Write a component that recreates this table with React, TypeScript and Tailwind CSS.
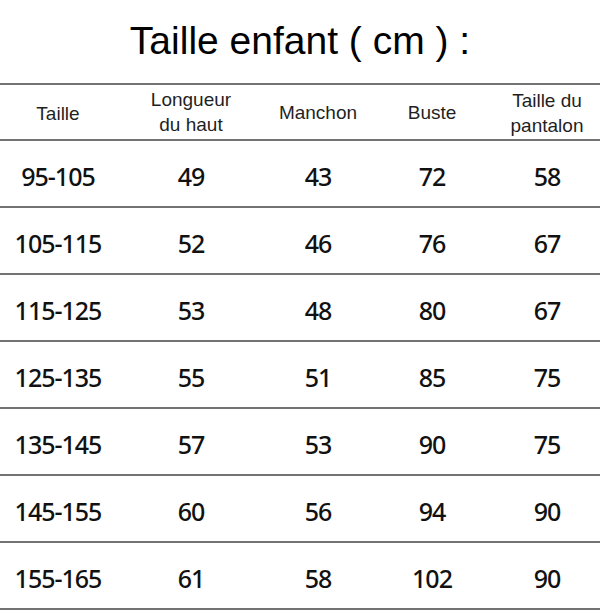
import React from 'react';

const rows: string[][] = [
  ['95-105', '49', '43', '72', '58'],
  ['105-115', '52', '46', '76', '67'],
  ['115-125', '53', '48', '80', '67'],
  ['125-135', '55', '51', '85', '75'],
  ['135-145', '57', '53', '90', '75'],
  ['145-155', '60', '56', '94', '90'],
  ['155-165', '61', '58', '102', '90'],
];

const cols = 'grid grid-cols-[116px_150px_104px_124px_106px]';

const App: React.FC = () => {
  return (
    <div className="w-[600px] h-[611px] bg-white overflow-hidden">
      <div className="h-[83px] flex items-center justify-center pb-[2px]">
        <h1 className="text-[39px] leading-none text-black font-['Liberation_Sans',Arial,sans-serif]">
          Taille enfant ( cm ) :
        </h1>
      </div>

      {/* header */}
      <div
        className={`${cols} h-[58px] border-y-2 border-[#737373] text-[19px] leading-[25px] text-[#1f1f1f] font-['Liberation_Sans',Arial,sans-serif]`}
      >
        <div className="flex items-center justify-center pt-[2px]">Taille</div>
        <div className="flex flex-col items-center justify-center">
          <span>Longueur</span>
          <span>du haut</span>
        </div>
        <div className="flex items-center justify-center">Manchon</div>
        <div className="flex items-center justify-center">Buste</div>
        <div className="flex flex-col items-center justify-center pt-[2px]">
          <span>Taille du</span>
          <span>pantalon</span>
        </div>
      </div>

      {/* data rows */}
      {rows.map((r) => (
        <div
          key={r[0]}
          className={`${cols} h-[67px] border-b-2 border-[#737373] text-[25px] leading-none font-medium tracking-[-0.04em] text-[#111] font-['Noto_Sans','Open_Sans',sans-serif]`}
        >
          {r.map((v, i) => (
            <div key={i} className="flex items-center justify-center pt-[5px]">
              {v}
            </div>
          ))}
        </div>
      ))}
    </div>
  );
};

export default App;
